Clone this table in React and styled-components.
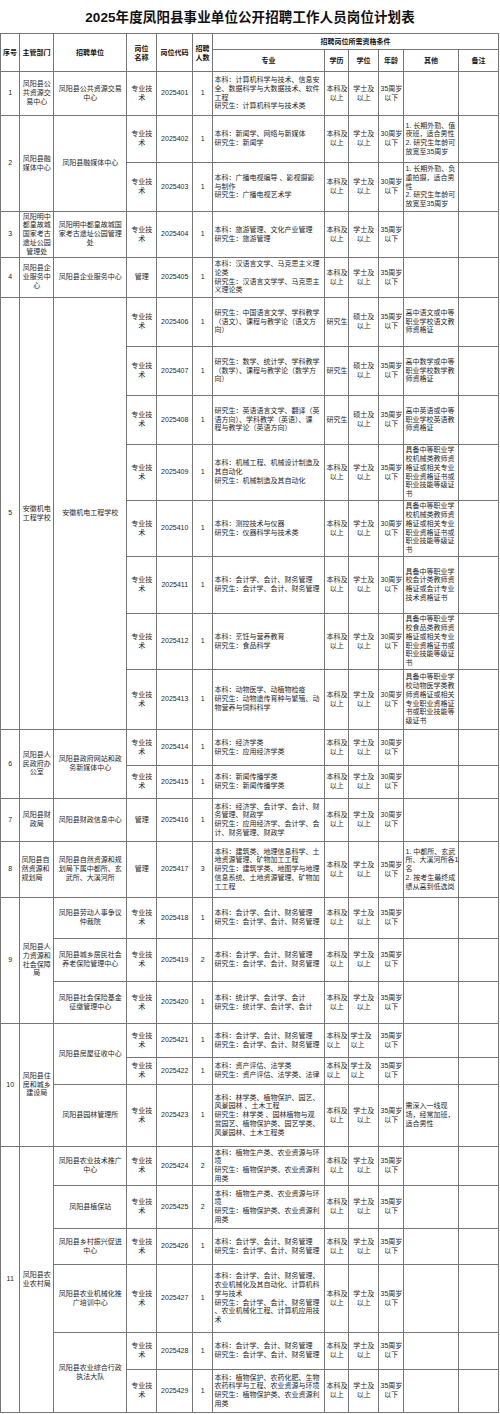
import React from 'react';
import styled, { createGlobalStyle } from 'styled-components';

const GlobalStyle = createGlobalStyle`
  html, body {
    margin: 0;
    padding: 0;
    background: #ffffff;
  }
  body {
    font-family: "Liberation Sans", "Noto Sans CJK SC", sans-serif;
    color: #222;
  }
`;

const Page = styled.div`
  width: 500px;
  background: #fff;
`;

const Title = styled.h1`
  margin: 0;
  height: 33px;
  line-height: 36px;
  font-size: 13.5px;
  font-weight: bold;
  text-align: center;
  color: #111;
  letter-spacing: 0.1px;
`;

const Table = styled.table`
  width: 498px;
  table-layout: fixed;
  border-collapse: collapse;
`;

const Col = styled.col`
  width: ${(p) => p.$w}px;
`;

const Row = styled.tr`
  height: ${(p) => p.$h}px;
`;

const Head = styled.th`
  border: 1px solid #767676;
  padding: 0;
  font-size: 7px;
  line-height: 9px;
  font-weight: bold;
  white-space: pre;
  text-align: center;
  vertical-align: middle;
  color: #111;
`;

const Cell = styled.td`
  border: 1px solid #767676;
  padding: 0 1px 0 1.5px;
  font-size: 7px;
  line-height: 8.7px;
  white-space: pre;
  text-align: ${(p) => p.$align || 'center'};
  vertical-align: middle;
  color: #1f1f1f;
`;

const widths = [19, 34, 73, 30, 36, 20, 112, 24, 30, 25, 55, 40];

const KJ = '本科：会计学、会计、财务管理\n研究生：会计学、会计、财务管理';
const ZB = '本科：植物生产类、农业资源与环\n境\n研究生：植物保护类、农业资源利\n用类';
const JX = '具备中等职业学\n校机械类教师资\n格证或相关专业\n职业资格证书或\n职业技能等级证\n书';

const post = (c, h, m, opts = {}) => ({
  c,
  h,
  m,
  t: '专业技\n术',
  n: 1,
  e: '本科及\n以上',
  d: '学士及\n以上',
  a: 35,
  o: '',
  ...opts,
});

const teacher = { e: '研究生', d: '硕士及\n以上' };

const groups = [
  {
    no: 1,
    dept: '凤阳县公\n共资源交\n易中心',
    units: [
      {
        name: '凤阳县公共资源交易\n中心',
        posts: [
          post('2025401', 44, '本科：计算机科学与技术、信息安\n全、数据科学与大数据技术、软件\n工程\n研究生：计算机科学与技术类'),
        ],
      },
    ],
  },
  {
    no: 2,
    dept: '凤阳县融\n媒体中心',
    units: [
      {
        name: '凤阳县融媒体中心',
        posts: [
          post('2025402', 47, '本科：新闻学、网络与新媒体\n研究生：新闻学', {
            a: 30,
            o: '1. 长期外勤、值\n夜班，适合男性\n2. 研究生年龄可\n放宽至35周岁',
          }),
          post('2025403', 49, '本科：广播电视编导 、影视摄影\n与制作\n研究生：广播电视艺术学', {
            a: 30,
            o: '1. 长期外勤、负\n重拍摄，适合男\n性\n2. 研究生年龄可\n放宽至35周岁',
          }),
        ],
      },
    ],
  },
  {
    no: 3,
    dept: '凤阳明中\n都皇故城\n国家考古\n遗址公园\n管理处',
    units: [
      {
        name: '凤阳明中都皇故城国\n家考古遗址公园管理\n处',
        posts: [post('2025404', 46, '本科：旅游管理、文化产业管理\n研究生：旅游管理')],
      },
    ],
  },
  {
    no: 4,
    dept: '凤阳县企\n业服务中\n心',
    units: [
      {
        name: '凤阳县企业服务中心',
        posts: [
          post('2025405', 40, '本科：汉语言文学、马克思主义理\n论类\n研究生：汉语言文学学、马克思主\n义理论类', { t: '管理' }),
        ],
      },
    ],
  },
  {
    no: 5,
    dept: '安徽机电\n工程学校',
    units: [
      {
        name: '安徽机电工程学校',
        posts: [
          post('2025406', 49, '研究生：中国语言文学、学科教学\n（语文）、课程与教学论（语文方\n向）', {
            ...teacher,
            o: '高中语文或中等\n职业学校语文教\n师资格证',
          }),
          post('2025407', 49, '研究生：数学、统计学、学科教学\n（数学）、课程与教学论（数学方\n向）', {
            ...teacher,
            o: '高中数学或中等\n职业学校数学教\n师资格证',
          }),
          post('2025408', 49, '研究生：英语语言文学、翻译（英\n语方向）、学科教学（英语）、课\n程与教学论（英语方向）', {
            ...teacher,
            o: '高中英语或中等\n职业学校英语教\n师资格证',
          }),
          post('2025409', 56, '本科：机械工程、机械设计制造及\n其自动化\n研究生：机械制造及其自动化', { o: JX }),
          post('2025410', 56, '本科：测控技术与仪器\n研究生：仪器科学与技术类', { a: 30, o: JX }),
          post('2025411', 57, KJ, {
            a: 30,
            o: '具备中等职业学\n校会计类教师资\n格证或会计专业\n技术资格证书',
          }),
          post('2025412', 56, '本科：烹饪与营养教育\n研究生：食品科学', {
            a: 30,
            o: '具备中等职业学\n校食品类教师资\n格证或相关专业\n职业资格证书或\n职业技能等级证\n书',
          }),
          post('2025413', 60, '本科：动物医学、动植物检疫\n研究生：动物遗传育种与繁殖、动\n物营养与饲料科学', {
            a: 30,
            o: '具备中等职业学\n校动物医学类教\n师资格证或相关\n专业职业资格证\n书或职业技能等\n级证书',
          }),
        ],
      },
    ],
  },
  {
    no: 6,
    dept: '凤阳县人\n民政府办\n公室',
    units: [
      {
        name: '凤阳县政府网站和政\n务新媒体中心',
        posts: [
          post('2025414', 36, '本科：经济学类\n研究生：应用经济学类', { a: 30 }),
          post('2025415', 33, '本科：新闻传播学类\n研究生：新闻传播学类', { a: 30 }),
        ],
      },
    ],
  },
  {
    no: 7,
    dept: '凤阳县财\n政局',
    units: [
      {
        name: '凤阳县财政信息中心',
        posts: [
          post('2025416', 43, '本科：经济学、会计学、会计、财\n务管理、财政学\n研究生：应用经济学、会计学、会\n计、财务管理、财政学', {
            a: 30,
            t: '管理',
          }),
        ],
      },
    ],
  },
  {
    no: 8,
    dept: '凤阳县自\n然资源和\n规划局',
    deptAlign: 'left',
    units: [
      {
        name: '凤阳县自然资源和规\n划局下属中都所、玄\n武所、大溪河所',
        posts: [
          post('2025417', 56, '本科：建筑类、地理信息科学、土\n地资源管理、矿物加工工程\n研究生：建筑学类、地图学与地理\n信息系统、土地资源管理、矿物加\n工工程', {
            t: '管理',
            n: 3,
            o: '1. 中都所、玄武\n所、大溪河所各1\n名\n2. 按考生最终成\n绩从高到低选岗',
          }),
        ],
      },
    ],
  },
  {
    no: 9,
    dept: '凤阳县人\n力资源和\n社会保障\n局',
    units: [
      { name: '凤阳县劳动人事争议\n仲裁院', posts: [post('2025418', 41, KJ)] },
      { name: '凤阳县城乡居民社会\n养老保险管理中心', posts: [post('2025419', 43, KJ, { n: 2 })] },
      {
        name: '凤阳县社会保险基金\n征缴管理中心',
        posts: [post('2025420', 42, '本科：统计学、会计学、会计\n研究生：统计学、会计学、会计')],
      },
    ],
  },
  {
    no: 10,
    dept: '凤阳县住\n房和城乡\n建设局',
    units: [
      {
        name: '凤阳县房屋征收中心',
        posts: [
          post('2025421', 34, KJ, { ea: 'left' }),
          post('2025422', 27, '本科：资产评估、法学类\n研究生：资产评估、法学类、法律', { ea: 'left' }),
        ],
      },
      {
        name: '凤阳县园林管理所',
        posts: [
          post('2025423', 62, '本科：林学类、植物保护、园艺、\n风景园林 、土木工程\n研究生：林学类 、园林植物与观\n赏园艺、植物保护类、园艺学类、\n风景园林、土木工程类', {
            o: '需深入一线现\n场，经常加班，\n适合男性',
          }),
        ],
      },
    ],
  },
  {
    no: 11,
    dept: '凤阳县农\n业农村局',
    units: [
      { name: '凤阳县农业技术推广\n中心', posts: [post('2025424', 39, ZB, { n: 2 })] },
      { name: '凤阳县植保站', posts: [post('2025425', 43, ZB, { n: 2 })] },
      { name: '凤阳县乡村振兴促进\n中心', posts: [post('2025426', 36, KJ)] },
      {
        name: '凤阳县农业机械化推\n广培训中心',
        posts: [
          post('2025427', 68, '本科：会计学、会计、财务管理、\n农业机械化及其自动化、计算机科\n学与技术\n研究生：会计学、会计、财务管理\n、农业机械化工程、计算机应用技\n术'),
        ],
      },
      {
        name: '凤阳县农业综合行政\n执法大队',
        posts: [
          post('2025428', 37, KJ),
          post('2025429', 43, '本科：植物保护、农药化肥、生物\n农药科学与工程、农业资源与环境\n研究生：植物保护类、农业资源利\n用类'),
        ],
      },
    ],
  },
];

const GroupRows = ({ group }) => {
  const total = group.units.reduce((s, u) => s + u.posts.length, 0);
  const rows = [];
  group.units.forEach((unit, ui) => {
    unit.posts.forEach((p, pi) => {
      const first = ui === 0 && pi === 0;
      rows.push(
        <Row key={p.c} $h={p.h}>
          {first && <Cell rowSpan={total}>{group.no}</Cell>}
          {first && (
            <Cell rowSpan={total} $align={group.deptAlign}>
              {group.dept}
            </Cell>
          )}
          {pi === 0 && <Cell rowSpan={unit.posts.length}>{unit.name}</Cell>}
          <Cell>{p.t}</Cell>
          <Cell>{p.c}</Cell>
          <Cell>{p.n}</Cell>
          <Cell $align="left">{p.m}</Cell>
          <Cell $align={p.ea}>{p.e}</Cell>
          <Cell $align={p.ea}>{p.d}</Cell>
          <Cell>{`${p.a}周岁\n以下`}</Cell>
          <Cell $align="left">{p.o}</Cell>
          <Cell />
        </Row>
      );
    });
  });
  return rows;
};

export default function App() {
  return (
    <Page>
      <GlobalStyle />
      <Title>2025年度凤阳县事业单位公开招聘工作人员岗位计划表</Title>
      <Table>
        <colgroup>
          {widths.map((w, i) => (
            <Col key={i} $w={w} />
          ))}
        </colgroup>
        <thead>
          <Row $h={16}>
            <Head rowSpan={2}>序号</Head>
            <Head rowSpan={2}>主管部门</Head>
            <Head rowSpan={2}>招聘单位</Head>
            <Head rowSpan={2}>{'岗位\n名称'}</Head>
            <Head rowSpan={2}>岗位代码</Head>
            <Head rowSpan={2}>{'招聘\n人数'}</Head>
            <Head colSpan={6}>招聘岗位所需资格条件</Head>
          </Row>
          <Row $h={22}>
            <Head>专业</Head>
            <Head>学历</Head>
            <Head>学位</Head>
            <Head>年龄</Head>
            <Head>其他</Head>
            <Head>备注</Head>
          </Row>
        </thead>
        <tbody>
          {groups.map((g) => (
            <GroupRows key={g.no} group={g} />
          ))}
        </tbody>
      </Table>
    </Page>
  );
}
